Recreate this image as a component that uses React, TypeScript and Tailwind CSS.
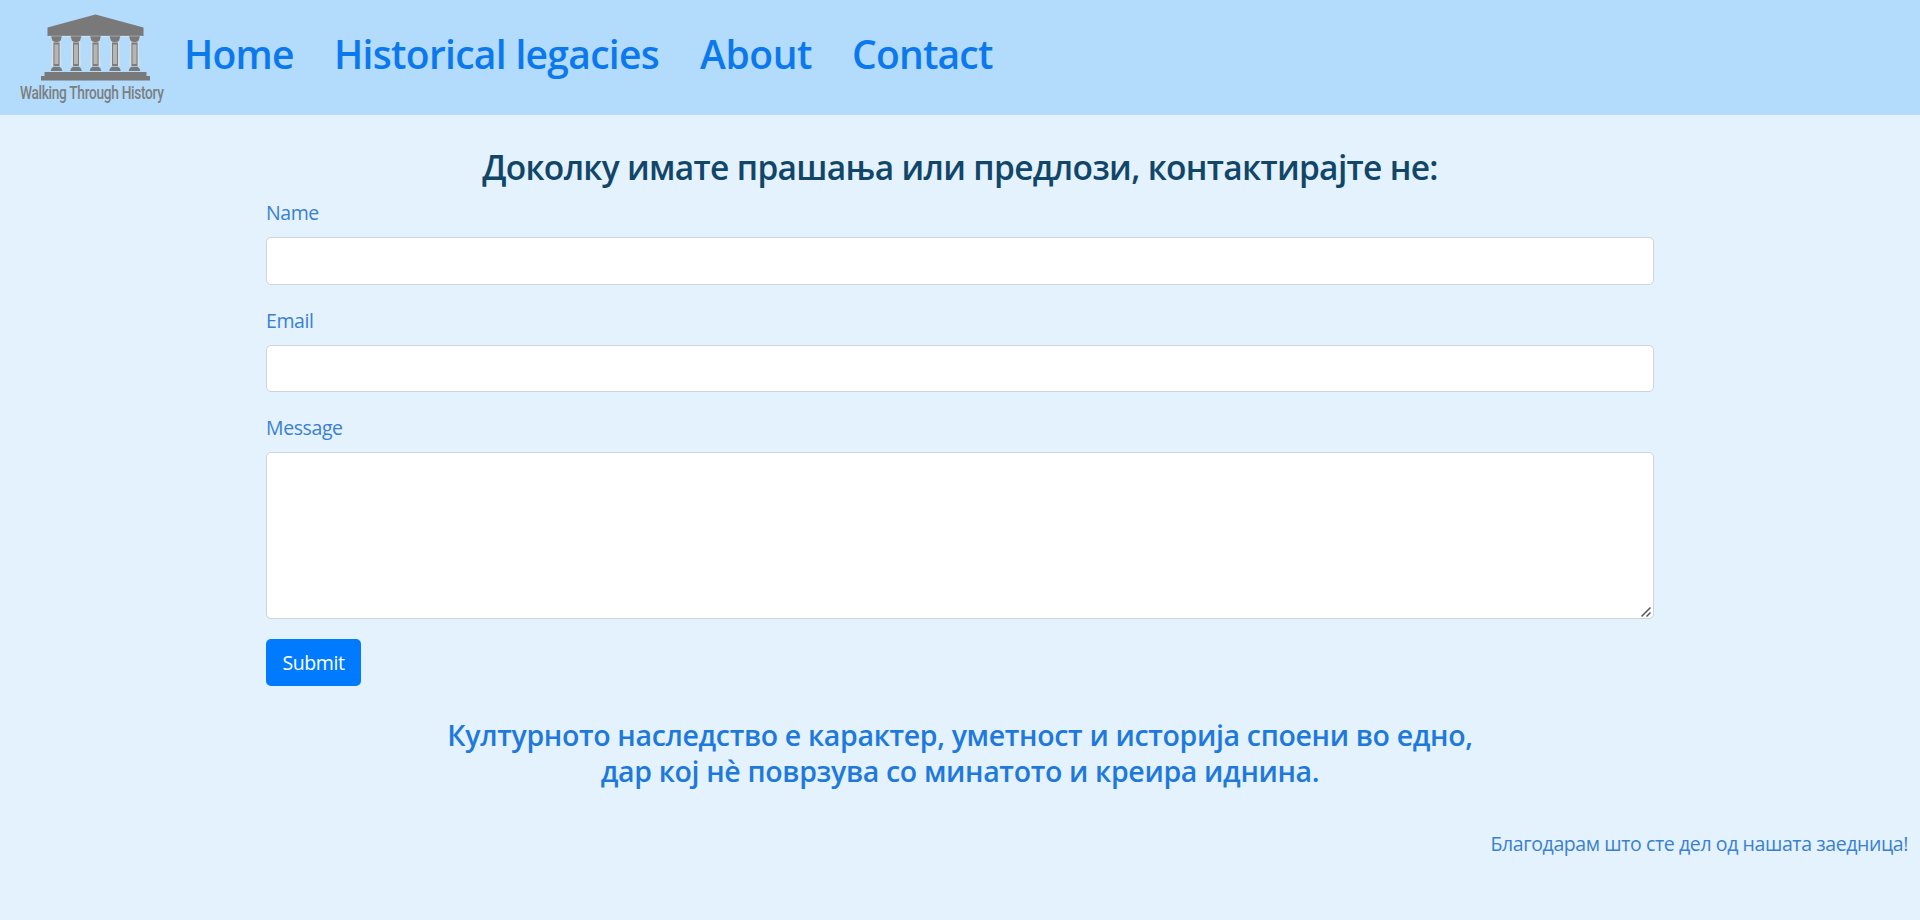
const navLinks = [
  { label: "Home", className: "w-[150px] tracking-[-0.8px]" },
  { label: "Historical legacies", className: "w-[366px] tracking-[-0.7px]" },
  { label: "About", className: "w-[152px] tracking-[-0.4px]" },
  { label: "Contact", className: "tracking-[-0.8px]" },
];

function Column({ x }: { x: number }) {
  return (
    <g transform={`translate(${x} 0)`}>
      <path d="M-4.6 36h9.2v21l1 9H-5.6l1-9z" fill="#d3dee6" />
      <path d="M-5.3 36.3H5.3L4.2 40.5Q3 42 0 42T-4.2 40.5Z" fill="#797979" />
      <path d="M-3 42.5H3V66H-3Z" fill="#b4b5b6" />
      <path d="M-3 42.5H3V44.5H-3ZM-3 44h1v21h-1ZM2 44h1v21h-1ZM-3 64H3V66H-3Z" fill="#7d7d7d" />
      <path d="M-5.8 71Q-5.3 67.5-3 66.8H3Q5.3 67.5 5.8 71Z" fill="#797979" />
    </g>
  );
}

function Logo() {
  return (
    <svg className="h-[115px] w-[184px] shrink-0" viewBox="0 0 184 115">
      <path d="M47.5 27.5 95.5 14.5 143.5 27.5V36H47.5Z" fill="#797979" />
      <path d="M49 36.3h93" stroke="#dde5ea" strokeWidth=".8" />
      {[56.5, 76, 95.5, 115, 134.5].map((x) => (
        <Column key={x} x={x} />
      ))}
      <path d="M44.5 72H146.5V76H150V80.5H41V76H44.5Z" fill="#797979" />
      <g transform="translate(20 99.3) scale(.74 1)">
        <text
          textLength="194"
          lengthAdjust="spacingAndGlyphs"
          className="fill-[#7b7f82] font-['Roboto'] text-[18px] font-medium"
        >
          Walking Through History
        </text>
      </g>
    </svg>
  );
}

export default function App() {
  return (
    <div className="h-[920px] overflow-hidden bg-[#e3f2fd] font-['Open_Sans','Noto_Sans',sans-serif] text-[19.5px] leading-[30px] tracking-[-0.4px] text-[#3a80cf]">
      <nav className="flex h-[115px] items-center bg-[#b3dbfb]">
        <Logo />
        <div className="flex pb-2 whitespace-nowrap text-[39px] leading-[60px] font-semibold text-[#0b78ee]">
          {navLinks.map((link) => (
            <a key={link.label} href="#" className={link.className}>
              {link.label}
            </a>
          ))}
        </div>
      </nav>

      <main className="mx-auto w-[1388px]">
        <h2 className="mt-[30px] h-[53px] whitespace-nowrap text-center text-[33.5px] leading-[44px] font-semibold tracking-[-0.67px] text-[#124669]">
          Доколку имате прашања или предлози, контактирајте не:
        </h2>
        <form onSubmit={(e) => e.preventDefault()}>
          <label htmlFor="name" className="block h-[39px]">
            Name
          </label>
          <input id="name" className="block h-[48px] w-full rounded-[5px] border border-[#ced4da] bg-white px-4 outline-none" />
          <label htmlFor="email" className="mt-[21px] block h-[39px]">
            Email
          </label>
          <input id="email" className="block h-[47px] w-full rounded-[5px] border border-[#ced4da] bg-white px-4 outline-none" />
          <label htmlFor="message" className="mt-[21px] block h-[39px]">
            Message
          </label>
          <div className="relative">
            <textarea id="message" className="block h-[167px] w-full resize-none rounded-[5px] border border-[#ced4da] bg-white px-4 py-2 outline-none" />
            <svg className="pointer-events-none absolute right-[2px] bottom-[1px] h-[12px] w-[12px]" viewBox="0 0 12 12" stroke="#555" strokeWidth="1.5">
              <path d="M1.5 10.5 10.5 1.5M6.5 10.5 10.5 6.5" />
            </svg>
          </div>
          <button type="submit" className="mt-5 block h-[47px] w-[95px] rounded-[5px] bg-[#007bff] pt-px text-white">
            Submit
          </button>
        </form>
        <div className="mt-[31px] whitespace-nowrap text-center text-[28.5px] leading-[36px] font-semibold tracking-[-0.34px] text-[#1f79dc]">
          <p>Културното наследство е карактер, уметност и историја споени во едно,</p>
          <p>дар кој нѐ поврзува со минатото и креира иднина.</p>
        </div>
      </main>
      <p className="mt-[40px] pr-[12px] text-right">Благодарам што сте дел од нашата заедница!</p>
    </div>
  );
}
